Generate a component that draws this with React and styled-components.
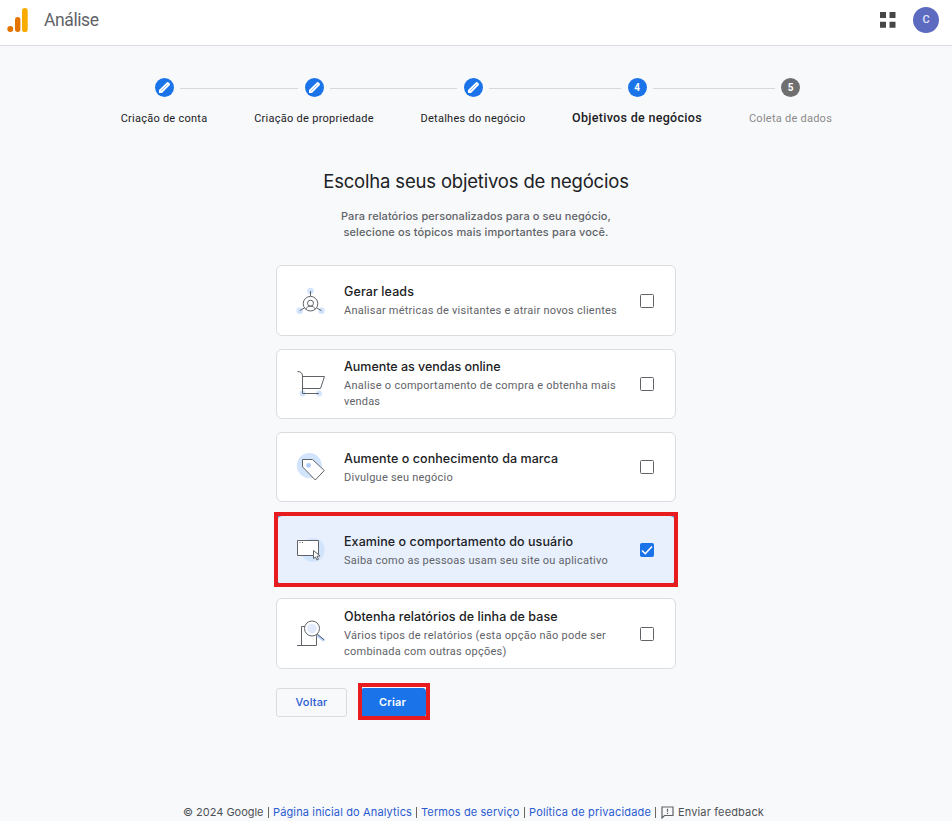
import React from 'react';
import styled, { createGlobalStyle, css } from 'styled-components';

const Global = createGlobalStyle`
  * { box-sizing: border-box; }
  html, body { margin: 0; background: #f8f9fb; }
  body { width: 952px; height: 821px; overflow: hidden; font-family: Roboto, Inter, sans-serif; color: #202124; }
`;

const Page = styled.div`
  width: 952px;
  height: 821px;
  display: flex;
  flex-direction: column;
`;

const Text = styled.span`
  display: block;
  font-family: ${p => (p.$display ? 'Inter, sans-serif' : 'Roboto, sans-serif')};
  font-size: ${p => p.$size || 11}px;
  line-height: ${p => p.$line || 16}px;
  font-weight: ${p => p.$weight || 400};
  letter-spacing: ${p => p.$track || 0}px;
  color: ${p => p.$color || '#202124'};
  white-space: nowrap;
`;

const Header = styled.header`
  height: 46px;
  flex: none;
  display: flex;
  align-items: flex-start;
  background: #fff;
  border-bottom: 1px solid #dadce0;
  padding: 7px 13px 0 7px;
`;
const Logo = styled.svg`
  width: 21px;
  height: 26px;
  margin-right: 16px;
`;
const AppsIcon = styled.svg`
  width: 16px;
  height: 16px;
  margin: 5px 17px 0 auto;
`;
const Avatar = styled.div`
  width: 26px;
  height: 26px;
  border-radius: 50%;
  background: #5c6bc0;
  display: flex;
  align-items: center;
  justify-content: center;
`;

const Stepper = styled.ol`
  list-style: none;
  margin: 0;
  padding: 32px 0 0 148px;
  display: grid;
  grid-template-columns: 32px 118px 32px 127px 32px 132px 32px 122px 31px;
  height: 124px;
  flex: none;
`;
const Step = styled.li`
  display: flex;
  flex-direction: column;
  align-items: center;
  gap: 14px;
`;
const Dot = styled.div`
  width: 19px;
  height: 19px;
  flex: none;
  border-radius: 50%;
  background: ${p => (p.$idle ? '#6f6f6f' : '#1a73e8')};
  display: flex;
  align-items: center;
  justify-content: center;
`;
const Connector = styled.li`
  height: 1px;
  margin-top: 10px;
  background: #d5d8dc;
`;

const Heading = styled.div`
  display: flex;
  flex-direction: column;
  align-items: center;
  flex: none;
  height: 95px;
`;
const Title = styled.h1`
  margin: -1px 0 15px;
`;
const Form = styled.main`
  width: 400px;
  margin-left: 276px;
  flex: none;
`;
const Cards = styled.div`
  display: grid;
  grid-template-rows: 71px 70px 70px 70px 71px;
  row-gap: 13px;
`;
const Card = styled.label`
  position: relative;
  display: flex;
  align-items: center;
  border: 1px solid #dadce0;
  border-radius: 6px;
  background: #fff;
  padding: 0 21px 0 19px;
  ${p => p.$selected && css`
    background: #e8f0fe;
    border-color: #1a73e8;
    &::after {
      content: '';
      position: absolute;
      inset: -4px -3px -3px -3px;
      border: 4px solid #e81c1f;
    }
  `}
`;
const Art = styled.svg`
  width: 30px;
  height: ${p => p.$h}px;
  overflow: visible;
  flex: none;
  margin-right: 18px;
  fill: none;
  stroke: #5f6368;
  stroke-width: 1;
`;
const Copy = styled.div`
  flex: 1;
  padding-bottom: ${p => p.$lift || 1}px;
`;
const Box = styled.span`
  width: 14px;
  height: 14px;
  flex: none;
  border-radius: 1.5px;
  border: 1px solid ${p => (p.$on ? '#1a73e8' : '#5f6368')};
  background: ${p => (p.$on ? '#1a73e8' : '#fff')};
  display: flex;
`;
const Actions = styled.div`
  display: flex;
  margin-top: 19px;
`;
const Button = styled.button`
  position: relative;
  height: 29px;
  width: ${p => (p.$primary ? 65 : 71)}px;
  margin-right: 14px;
  padding: ${p => (p.$primary ? '0 2px 2px 0' : '0 0 2px')};
  text-align: center;
  border-radius: 3px;
  border: 1px solid ${p => (p.$primary ? '#1a73e8' : '#dadce0')};
  background: ${p => (p.$primary ? '#1a73e8' : '#f8f9fb')};
  ${p => p.$primary && css`
    &::after {
      content: '';
      position: absolute;
      inset: -6px -5px -4px -4px;
      border: 4px solid #e81c1f;
    }
  `}
`;
const Footer = styled.footer`
  display: flex;
  align-items: center;
  margin: auto 0 0 183px;
  height: 18px;
`;
const FooterText = styled(Text)`
  width: ${p => p.$w}px;
`;
const Divider = styled.i`
  width: 1px;
  height: 11px;
  margin: 0 4px;
  background: #6b6560;
`;
const FeedbackIcon = styled.svg`
  width: 13px;
  height: 13px;
  margin: 1px 4px 0 1px;
`;

const Pencil = () => (
  <svg width="13" height="13" viewBox="0 0 13 13">
    <path d="M1 12V9L8.800 1.400a1.300 1.300 0 0 1 1.800 0l1 1a1.300 1.300 0 0 1 0 1.800L4 12Z" fill="#fff" />
    <path d="M3.200 9.800 9.500 3.500" stroke="#76abf1" strokeWidth=".8" />
  </svg>
);

const art = {
  leads: (
    <>
      <g fill="#d2e3fc" stroke="none"><circle cx="14.500" cy="5" r="3.200" /><circle cx="3.700" cy="24.700" r="3.200" /><circle cx="25.500" cy="24.700" r="3.200" /></g>
      <path d="M14.500 5v5M3.700 24.700l4.500-2.600M25.500 24.700 21 22.100" />
      <circle cx="14.500" cy="17.700" r="7.300" fill="#fff" />
      <circle cx="14.500" cy="17.200" r="3" />
      <path d="M9.700 23.200c.8-2 2.500-3 4.800-3s4 1 4.800 3" />
    </>
  ),
  cart: (
    <>
      <g fill="#d2e3fc" stroke="none"><circle cx="6.500" cy="24.500" r="3" /><circle cx="23" cy="24.500" r="3" /></g>
      <path d="M1.500 2.500c3 0 5 1.500 5 4.500v17.500H23M6.500 7.500h22l-4 12h-18" />
    </>
  ),
  tag: (
    <>
      <circle cx="13.300" cy="13.600" r="12.500" fill="#d2e3fc" stroke="none" />
      <path d="M6.500 7.500h10l11.800 11L19.300 28 6.500 14.800z" fill="#fff" />
      <circle cx="12.600" cy="13.300" r="2.400" fill="#aecbfa" stroke="none" />
    </>
  ),
  screen: (
    <>
      <circle cx="16.700" cy="15" r="12" fill="#d2e3fc" stroke="none" />
      <path d="M1.500 5.500h21v15h-21z" fill="#fff" />
      <path d="M3.500 7.500h1M6 7.500h1" />
      <path d="M17.500 15.500v8l2-1.500 1.500 3 1.500-.8-1.500-2.900 3-.4z" fill="#fff" />
    </>
  ),
  report: (
    <>
      <path d="M1 26.500h19.500V16M5.500 26.500v-19h6" />
      <path d="m21 16 7 5.500" stroke="#aecbfa" strokeWidth="2.500" />
      <path d="m20.500 14.500 7.800 6.500" />
      <circle cx="16" cy="9.500" r="7.500" fill="#fff" />
      <circle cx="16" cy="9.500" r="4.800" fill="#e1ebfd" stroke="none" />
    </>
  ),
};

const options = [
  { icon: 'leads', h: 29, title: 'Gerar leads', track: 0.1, lines: [['Analisar métricas de visitantes e atrair novos clientes', 0.236]] },
  { icon: 'cart', h: 30, lift: 3, title: 'Aumente as vendas online', track: -0.03, lines: [['Analise o comportamento de compra e obtenha mais', 0.256], ['vendas', 0.2]] },
  { icon: 'tag', h: 30, title: 'Aumente o conhecimento da marca', track: 0.07, lines: [['Divulgue seu negócio', 0.243]] },
  { icon: 'screen', h: 30, title: 'Examine o comportamento do usuário', track: 0.07, lines: [['Saiba como as pessoas usam seu site ou aplicativo', 0.241]], on: true },
  { icon: 'report', h: 29, title: 'Obtenha relatórios de linha de base', track: 0.06, lines: [['Vários tipos de relatórios (esta opção não pode ser', 0.255], ['combinada com outras opções)', 0.247]] },
];

const steps = [
  ['Criação de conta', 0.25],
  ['Criação de propriedade', 0.27],
  ['Detalhes do negócio', 0.28],
  ['Objetivos de negócios', 0.31],
  ['Coleta de dados', 0.25],
];

const link = '#2a5bd0';

export default function App() {
  return (
    <Page>
      <Global />
      <Header>
        <Logo viewBox="0 0 21 26">
          <rect x="15" y="1" width="5.700" height="24" rx="2.850" fill="#f9ab00" />
          <rect x="8" y="10" width="5.400" height="15" rx="2.700" fill="#e37400" />
          <circle cx="3.300" cy="22" r="3" fill="#e37400" />
        </Logo>
        <Text $size={17.5} $line={26} $track={-0.4} $color="#5f6368">Análise</Text>
        <AppsIcon viewBox="0 0 16 16" fill="#444746">
          <path d="M0 0h6v6H0zM9.500 0h6v6h-6zM0 9.800h6v6H0zM9.500 9.800h6v6h-6z" />
        </AppsIcon>
        <Avatar><Text $weight={500} $color="#e4e7fa">C</Text></Avatar>
      </Header>
      <Stepper>
        {steps.map(([label, track], i) => (
          <React.Fragment key={label}>
            {i > 0 && <Connector />}
            <Step>
              <Dot $idle={i === 4}>{i < 3 ? <Pencil /> : <Text $size={10} $weight={700} $color="#fff">{i + 1}</Text>}</Dot>
              <Text
                $size={i === 3 ? 12.5 : 11}
                $line={i === 3 ? 14 : 16}
                $weight={i === 3 ? 500 : 400}
                $track={track}
                $color={i === 4 ? '#8a8a8a' : '#202124'}
              >
                {label}
              </Text>
            </Step>
          </React.Fragment>
        ))}
      </Stepper>
      <Heading>
        <Title><Text $display $size={18.5} $line={24} $track={-0.18}>Escolha seus objetivos de negócios</Text></Title>
        <Text $display $weight={500} $color="#5f6368" $track={0.08}>Para relatórios personalizados para o seu negócio,</Text>
        <Text $display $weight={500} $color="#5f6368" $track={0.11}>selecione os tópicos mais importantes para você.</Text>
      </Heading>
      <Form>
        <Cards>
          {options.map(o => (
            <Card key={o.icon} $selected={o.on}>
              <Art $h={o.h} viewBox={`0 0 30 ${o.h}`}>{art[o.icon]}</Art>
              <Copy $lift={o.lift}>
                <Text $display $size={12.5} $line={22} $weight={500} $track={o.track}>{o.title}</Text>
                {o.lines.map(([line, track]) => <Text key={line} $color="#5f6368" $track={track}>{line}</Text>)}
              </Copy>
              <Box $on={o.on}>
                {o.on && <svg width="12" height="12" viewBox="0 0 12 12"><path d="m1 6.500 3.300 3.200L11 2.500" fill="none" stroke="#fff" strokeWidth="1.600" /></svg>}
              </Box>
            </Card>
          ))}
        </Cards>
        <Actions>
          <Button><Text $display $weight={500} $color={link} $track={0.15}>Voltar</Text></Button>
          <Button $primary><Text $display $weight={600} $color="#fff" $track={0.15}>Criar</Text></Button>
        </Actions>
      </Form>
      <Footer>
        <FooterText $w={81} $display $color="#4d5156" $track={-0.02}>© 2024 Google</FooterText>
        <Divider />
        <FooterText $w={139} $display $color={link} $track={0.141}>Página inicial do Analytics</FooterText>
        <Divider />
        <FooterText $w={99} $display $color={link} $track={0.111}>Termos de serviço</FooterText>
        <Divider />
        <FooterText $w={122} $display $color={link} $track={0.17}>Política de privacidade</FooterText>
        <Divider />
        <FeedbackIcon viewBox="0 0 13 13" fill="none" stroke="#5f6368" strokeWidth="1.200">
          <path d="M1 12V1h11v8.500H3.500z" />
          <path d="M6.500 2.800v3M6.500 6.800v1.200" />
        </FeedbackIcon>
        <Text $display $line={18} $color="#4d5156" $track={0.143}>Enviar feedback</Text>
      </Footer>
    </Page>
  );
}
